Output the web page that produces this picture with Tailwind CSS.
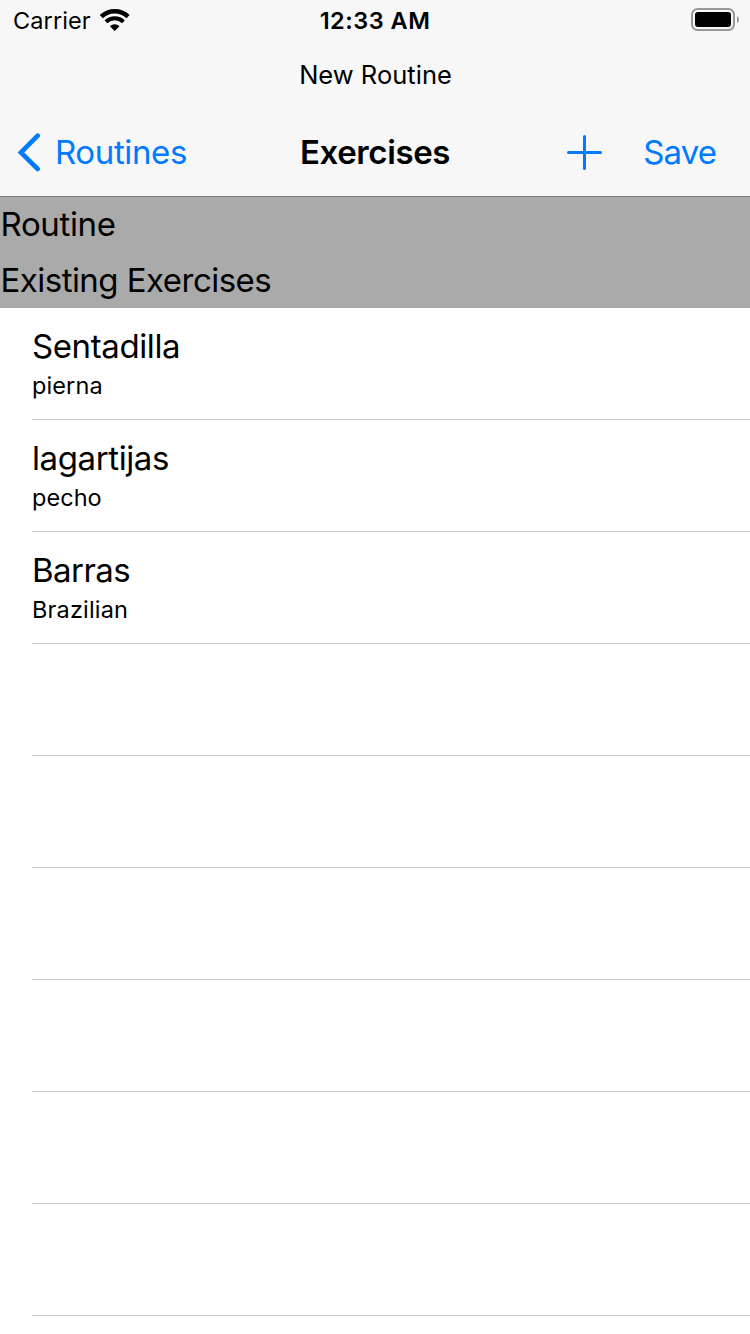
<!DOCTYPE html>
<html lang="en">
<head>
<meta charset="utf-8">
<title>Exercises</title>
<script src="https://cdn.jsdelivr.net/npm/@tailwindcss/browser@4"></script>
</head>
<body class="bg-white">
<div class="w-[750px] h-[1334px] overflow-hidden flex flex-col bg-white text-black font-['Inter','Liberation_Sans',sans-serif] whitespace-nowrap">
  <header class="h-[197px] shrink-0 bg-[#f7f7f7] border-b border-[#7b7b7b] flex flex-col">
    <div class="h-10 grid grid-cols-3 items-center text-[23.5px] leading-[38px]">
      <div class="flex items-center pl-[13px] gap-[9px]">
        <span class="w-[78px] pt-0.5 tracking-[0.1px]">Carrier</span>
        <svg class="w-[30px] h-[23px]" viewBox="0 0 30 23" fill="none" stroke="#000">
          <path d="M1.3 7.6A19.5 19.5 0 0 1 28.1 7.6" stroke-width="4.4"/>
          <path d="M6 12.9A12.3 12.3 0 0 1 23.4 12.9" stroke-width="4"/>
          <path d="M9.9 17.2A6.8 6.8 0 0 1 19.5 17.2L14.7 22Z" fill="#000" stroke="none"/>
        </svg>
      </div>
      <div class="pt-0.5 text-center font-semibold tracking-[0.5px]">12:33 AM</div>
      <div class="flex justify-end">
        <svg class="w-[60px] h-[24px]" viewBox="0 0 60 24" fill="none">
          <rect x="2" y="1" width="42" height="21" rx="5.5" stroke="#989898" stroke-width="2"/>
          <rect x="5" y="4" width="36" height="15" rx="3" fill="#000"/>
          <path d="M47 8Q49 9 49 11.5T47 15Z" fill="#989898"/>
        </svg>
      </div>
    </div>
    <div class="h-[68px] pt-0.5 pl-px flex items-center justify-center text-[25.5px] tracking-[0.02px]">New Routine</div>
    <nav class="h-[88px] grid grid-cols-3 items-center text-[33px] leading-[88px]">
      <div class="flex items-center pl-[17px] gap-[14px] text-[#007aff]">
        <svg class="w-6 h-10" viewBox="0 0 24 40" fill="none" stroke="#007aff" stroke-width="4.6" stroke-linecap="round" stroke-linejoin="miter"><path d="M20.7 3.7L3.9 20.5L20.7 37"/></svg>
        <span class="tracking-[-0.38px]">Routines</span>
      </div>
      <div class="text-center font-semibold tracking-[-0.4px]">Exercises</div>
      <div class="flex items-center justify-end pr-[34px] gap-[41px] text-[#007aff]">
        <svg class="w-9 h-9" viewBox="0 0 36 36" fill="none" stroke="#007aff" stroke-width="3" stroke-linecap="round"><path d="M2.5 18.5H34.5M18.5 2.5V34.5"/></svg>
        <span class="tracking-[-0.9px]">Save</span>
      </div>
    </nav>
  </header>
  <div class="h-[111px] shrink-0 bg-[#aaaaaa] text-[33px]">
    <div class="h-[55px] leading-[55px] pl-[0.5px] tracking-[-0.35px]">Routine</div>
    <div class="h-[56px] leading-[56px] pl-[0.5px] tracking-[-0.53px]">Existing Exercises</div>
  </div>
  <ul class="pl-8">
    <li class="h-28 border-b border-[#c6c6c8] pt-[18px]"><div class="text-[33px] leading-10 tracking-[-0.4px]">Sentadilla</div><div class="text-[23.5px] leading-10 tracking-[0.1px]">pierna</div></li>
    <li class="h-28 border-b border-[#c6c6c8] pt-[18px]"><div class="text-[33px] leading-10 tracking-[-0.4px]">lagartijas</div><div class="text-[23.5px] leading-10 tracking-[0.05px]">pecho</div></li>
    <li class="h-28 border-b border-[#c6c6c8] pt-[18px]"><div class="text-[33px] leading-10 tracking-[-0.55px]">Barras</div><div class="text-[23.5px] leading-10 tracking-[0.18px]">Brazilian</div></li>
    <li class="h-28 border-b border-[#c6c6c8]"></li>
    <li class="h-28 border-b border-[#c6c6c8]"></li>
    <li class="h-28 border-b border-[#c6c6c8]"></li>
    <li class="h-28 border-b border-[#c6c6c8]"></li>
    <li class="h-28 border-b border-[#c6c6c8]"></li>
    <li class="h-28 border-b border-[#c6c6c8]"></li>
  </ul>
</div>
</body>
</html>
